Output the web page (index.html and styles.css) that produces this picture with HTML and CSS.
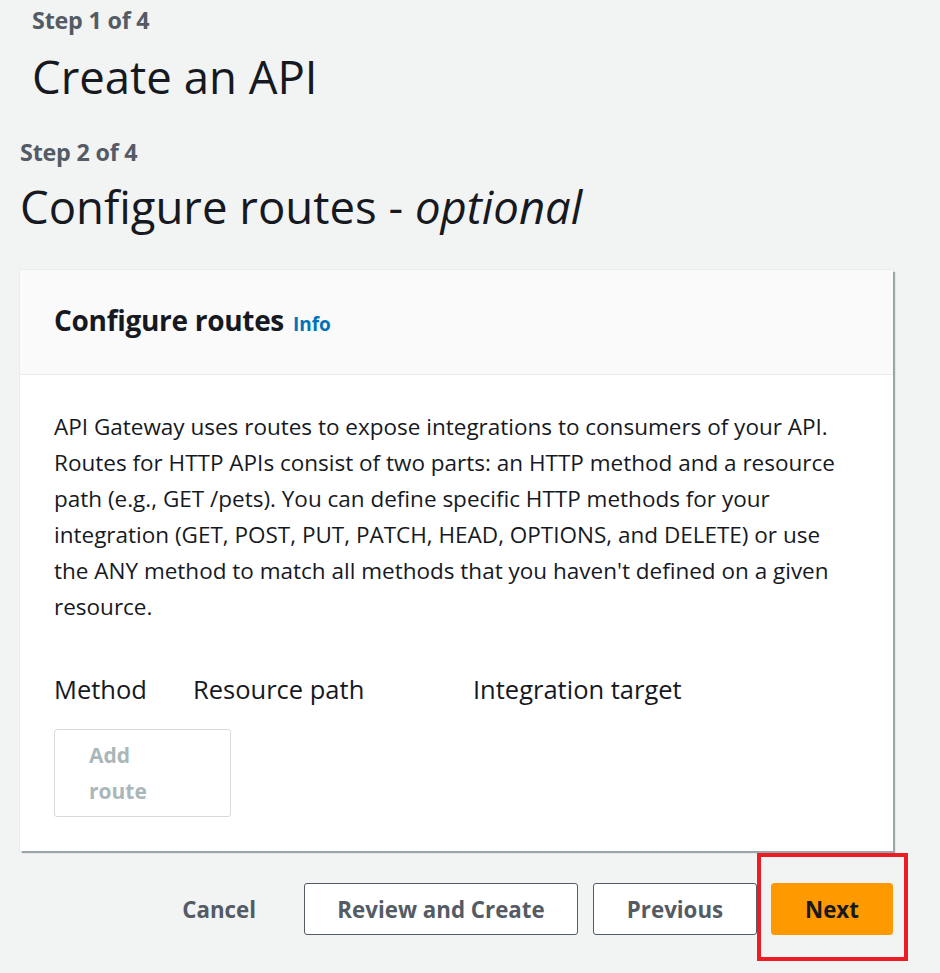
FILE: index.html
```html
<!DOCTYPE html>
<html lang="en">
<head>
<meta charset="utf-8">
<title>Create an API</title>
<link rel="stylesheet" href="styles.css">
</head>
<body>
<div class="page">
  <div class="step step-one">Step 1 of 4</div>
  <h1 class="title title-one">Create an API</h1>
  <div class="step step-two">Step 2 of 4</div>
  <h1 class="title title-two">Configure routes - <em>optional</em></h1>

  <section class="card">
    <header class="card-header">
      <h2 class="card-title">Configure routes <a class="info" href="#">Info</a></h2>
    </header>
    <div class="card-body">
      <p class="desc">API Gateway uses routes to expose integrations to consumers of your API. Routes for HTTP APIs consist of two parts: an HTTP method and a resource path (e.g., GET /pets). You can define specific HTTP methods for your integration (GET, POST, PUT, PATCH, HEAD, OPTIONS, and DELETE) or use the ANY method to match all methods that you haven't defined on a given resource.</p>
      <div class="cols">
        <span class="col col-method">Method</span>
        <span class="col col-path">Resource path</span>
        <span class="col col-target">Integration target</span>
      </div>
      <button class="add-route" disabled>Add<br>route</button>
    </div>
  </section>

  <div class="actions">
    <button class="btn btn-link">Cancel</button>
    <button class="btn btn-normal btn-review">Review and Create</button>
    <button class="btn btn-normal btn-prev">Previous</button>
    <div class="highlight">
      <button class="btn btn-primary">Next</button>
    </div>
  </div>
</div>
</body>
</html>
```

FILE: styles.css
```css
* { box-sizing: border-box; }
html, body {
  margin: 0;
  padding: 0;
  background: #f2f3f3;
}
body {
  font-family: "Open Sans", "Noto Sans", sans-serif;
  color: #16191f;
  width: 940px;
  height: 973px;
  overflow: hidden;
}
.page {
  padding-top: 4px;
}
.step {
  font-size: 23.3px;
  font-weight: 700;
  color: #545b64;
  line-height: 32px;
  letter-spacing: -0.2px;
}
.step-one { margin-left: 32px; }
.step-two { margin-left: 20px; margin-top: 0; }
.title {
  font-weight: 400;
  font-size: 45.5px;
  line-height: 60px;
  margin: 0;
}
.title-one { margin-left: 32px; margin-top: 10px; margin-bottom: 30px; }
.title-two { margin-left: 20px; margin-top: 8px; }
.title em { font-style: italic; }

.card {
  margin: 34px 0 0 20px;
  width: 873px;
  background: #fff;
  box-shadow: 2px 2px 1px 0 rgba(0, 28, 36, 0.35), 0 0 0 1px #eaeded;
}
.card-header {
  background: #fafafa;
  height: 105px;
  border-bottom: 1px solid #eaeded;
  padding: 0 34px 4px;
  display: flex;
  align-items: center;
}
.card-title {
  margin: 0;
  font-size: 28px;
  font-weight: 700;
  letter-spacing: -0.3px;
  color: #16191f;
}
.info {
  color: #0073bb;
  font-size: 19px;
  font-weight: 700;
  text-decoration: none;
  letter-spacing: 0;
  margin-left: 2px;
}
.card-body {
  padding: 34px 34px 34px;
}
.desc {
  margin: 0;
  font-size: 22.5px;
  line-height: 36px;
  color: #16191f;
}
.cols {
  display: flex;
  margin-top: 46px;
  font-size: 25.5px;
  line-height: 36px;
}
.col-method { width: 139px; }
.col-path { width: 280px; }
.add-route {
  display: block;
  margin-top: 22px;
  width: 177px;
  height: 88px;
  border: 1px solid #d5dbdb;
  border-radius: 3px;
  background: #fff;
  color: #aab7b8;
  font-family: inherit;
  font-size: 21px;
  font-weight: 700;
  line-height: 36px;
  text-align: left;
  padding: 6px 34px;
}

.actions {
  display: flex;
  justify-content: flex-end;
  align-items: center;
  width: 908px;
  margin-top: 2px;
}
.btn {
  font-family: inherit;
  font-size: 22.3px;
  font-weight: 700;
  height: 52px;
  border-radius: 3px;
  cursor: pointer;
  padding: 0;
}
.btn-link {
  background: transparent;
  border: none;
  color: #545b64;
  padding: 0 22px;
  margin-right: 26px;
  margin-top: 4px;
}
.btn-normal {
  background: #fff;
  border: 1px solid #545b64;
  color: #545b64;
  margin-top: 4px;
}
.btn-review { width: 274px; margin-right: 15px; }
.btn-prev { width: 164px; }
.highlight {
  border: 4px solid #ed1c24;
  padding: 26px 11px 22px 10px;
  width: 151px;
}
.btn-primary {
  width: 122px;
  background: #ff9900;
  border: 1px solid #ff9900;
  color: #16191f;
  display: block;
}
```
